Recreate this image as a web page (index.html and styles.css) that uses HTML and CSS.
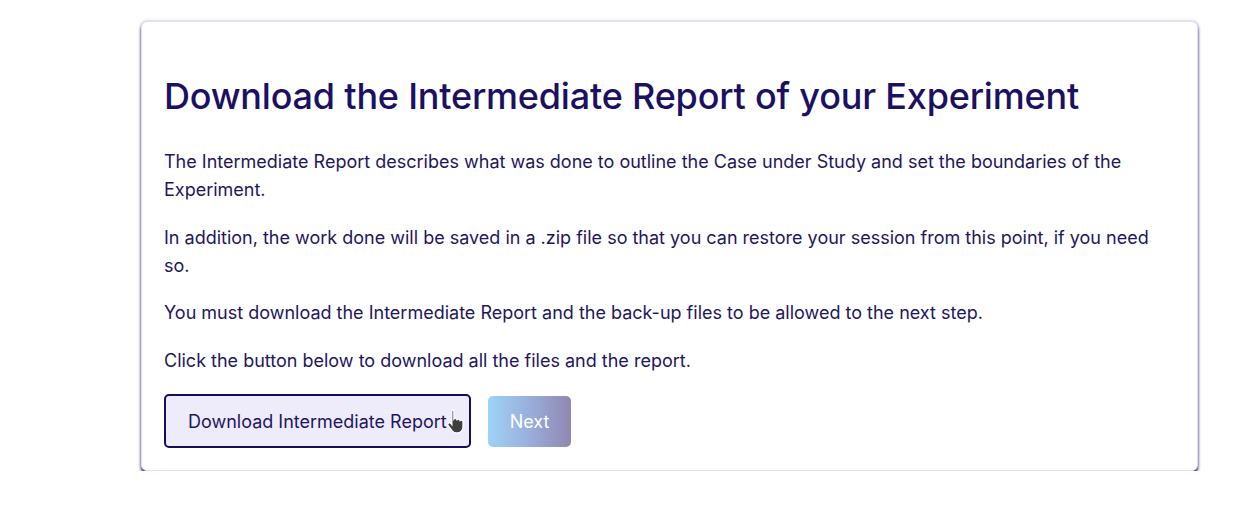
FILE: index.html
```html
<!DOCTYPE html>
<html>
<head>
<meta charset="utf-8">
<link rel="stylesheet" href="styles.css">
</head>
<body>
<div class="page">
  <div class="card">
    <h1 class="title">Download the Intermediate Report of your Experiment</h1>
    <p class="text">The Intermediate Report describes what was done to outline the Case under Study and set the boundaries of the Experiment.</p>
    <p class="text">In addition, the work done will be saved in a .zip file so that you can restore your session from this point, if you need so.</p>
    <p class="text">You must download the Intermediate Report and the back-up files to be allowed to the next step.</p>
    <p class="text">Click the button below to download all the files and the report.</p>
    <div class="actions">
      <button class="btn btn-download">Download Intermediate Report
        <svg class="cursor" width="22" height="26" viewBox="0 0 20 24">
          <path d="M5.5 1.5c.9 0 1.6.7 1.6 1.6v7.2c.3-.4.8-.6 1.3-.6.8 0 1.4.5 1.6 1.2.3-.3.7-.5 1.2-.5.8 0 1.4.5 1.6 1.2.3-.3.7-.4 1.1-.4.9 0 1.6.7 1.6 1.6v4.8c0 3-2.2 5.4-5.2 5.4H9.5c-1.6 0-2.9-.7-3.9-1.9L1.9 16.2c-.6-.7-.5-1.7.2-2.2.7-.5 1.6-.4 2.1.2l1.1 1.3V3.1c0-.9.7-1.6 1.6-1.6z" fill="#404040" stroke="#fff" stroke-width="1.1"/>
        </svg>
      </button>
      <button class="btn btn-next">Next</button>
    </div>
  </div>
</div>
</body>
</html>
```
FILE: styles.css
```css
html, body {
  margin: 0;
  padding: 0;
  background: #ffffff;
}
.page {
  padding: 21px 0 0 141px;
  font-family: Inter, "Noto Sans", sans-serif;
  color: #1e1660;
}
.card {
  width: 1057px;
  height: 450px;
  box-sizing: border-box;
  padding: 48px 23px 0 22px;
  background: #fff;
  border-radius: 6px;
  border: 1px solid #e2dff0;
  box-shadow: 0 3px 3px rgba(45, 35, 115, 0.95), 0 0 3px rgba(45, 35, 115, 0.35);
}
.title {
  margin: 0 0 26px 0;
  font-size: 36px;
  font-weight: 500;
  line-height: 52px;
  color: #1b1062;
  letter-spacing: -0.2px;
}
.text {
  margin: 0 0 19.5px 0;
  font-size: 18px;
  line-height: 28px;
  color: #1e1660;
}
.actions {
  display: flex;
  align-items: center;
  gap: 17px;
  margin-top: 2px;
}
.btn {
  font-family: Inter, "Noto Sans", sans-serif;
  font-size: 18px;
  border-radius: 5px;
  cursor: pointer;
  padding: 0 22px;
}
.btn-download {
  position: relative;
  height: 54px;
  border: 2px solid #160d5a;
  background: #eeebfb;
  color: #1e1660;
}
.btn-next {
  height: 51px;
  border: none;
  color: #fff;
  background: linear-gradient(90deg, #9ed3f6 0%, #9aaedc 50%, #9087b0 100%);
}
.cursor {
  position: absolute;
  left: 280px;
  top: 12px;
}
```
